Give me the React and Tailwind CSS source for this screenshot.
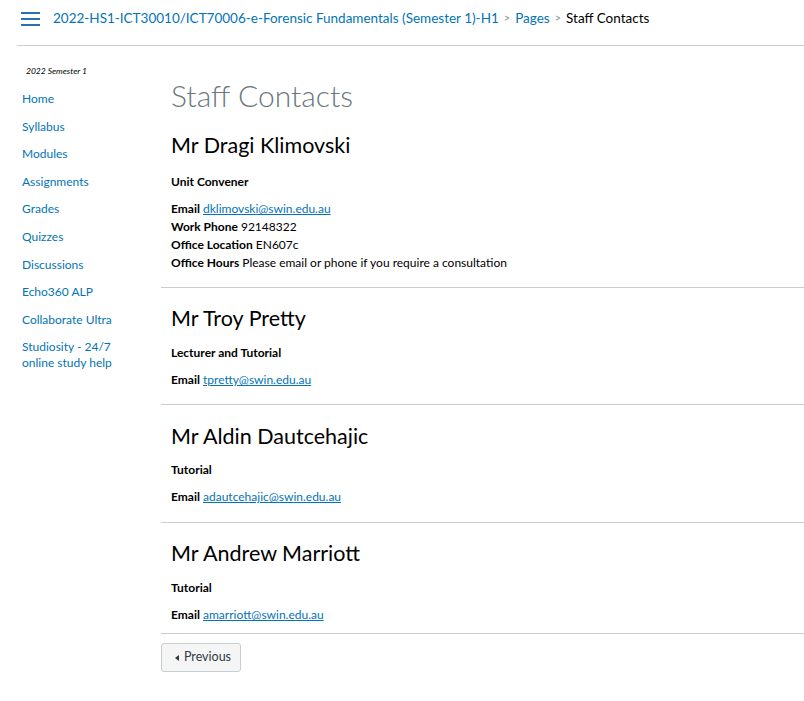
import React from "react";

const font = { fontFamily: "Lato, 'Noto Sans', sans-serif" };

const nav = [
  "Home",
  "Syllabus",
  "Modules",
  "Assignments",
  "Grades",
  "Quizzes",
  "Discussions",
  "Echo360 ALP",
  "Collaborate Ultra",
];

function Staff({ name, role, children, nameTop, roleTop }) {
  return (
    <div>
      <h2 className={`text-[21.5px] leading-[26px] text-black ${nameTop}`}>{name}</h2>
      <p className={`${roleTop} text-[12px] leading-[18px] font-bold text-black`}>{role}</p>
      <div className="mt-[9px] text-[12px] leading-[18px] text-black">{children}</div>
    </div>
  );
}

function Email({ addr }) {
  return (
    <div>
      <span className="font-bold">Email</span>{" "}
      <a className="text-[#0374b5] underline">{addr}</a>
    </div>
  );
}

export default function App() {
  return (
    <div className="w-[804px] h-[701px] bg-white overflow-hidden" style={font}>
      <header className="ml-[17px] h-[46px] border-b border-[#c7cdd1] flex items-center">
        <div className="ml-[4px] mt-[-8px] w-[19px] flex flex-col gap-[4px]">
          <div className="h-[2px] bg-[#2d6fb4]" />
          <div className="h-[2px] bg-[#2d6fb4]" />
          <div className="h-[2px] bg-[#2d6fb4]" />
        </div>
        <nav className="ml-[13px] mt-[-8px] flex items-center text-[13.5px] text-[#0374b5]">
          <span>2022-HS1-ICT30010/ICT70006-e-Forensic Fundamentals (Semester 1)-H1</span>
          <span className="mx-[5px] text-[#8b969e] text-[11px]">&gt;</span>
          <span>Pages</span>
          <span className="mx-[5px] text-[#8b969e] text-[11px]">&gt;</span>
          <span className="text-black">Staff Contacts</span>
        </nav>
      </header>
      <div className="flex">
        <aside className="w-[161px] shrink-0 pl-[22px]">
          <div className="mt-[19px] ml-[4px] text-[8.5px] italic text-black leading-[12px]">2022 Semester 1</div>
          <ul className="mt-[14px] text-[12px] text-[#0374b5]">
            {nav.map((n) => (
              <li key={n} className="h-[27.6px] leading-[16px]">{n}</li>
            ))}
            <li className="leading-[16px]">Studiosity - 24/7<br />online study help</li>
          </ul>
        </aside>
        <main className="flex-1">
          <div className="pl-[10px]">
            <h1 className="mt-[31px] text-[30px] leading-[36px] font-light text-[#6b7780]">Staff Contacts</h1>
            <Staff name="Mr Dragi Klimovski" role="Unit Convener" nameTop="mt-[19px]" roleTop="mt-[15px]">
              <Email addr="dklimovski@swin.edu.au" />
              <div><span className="font-bold">Work Phone</span> 92148322</div>
              <div><span className="font-bold">Office Location</span> EN607c</div>
              <div><span className="font-bold">Office Hours</span> Please email or phone if you require a consultation</div>
            </Staff>
          </div>
          <hr className="mt-[15px] border-t border-[#c7cdd1]" />
          <div className="pl-[10px]">
            <Staff name="Mr Troy Pretty" role="Lecturer and Tutorial" nameTop="mt-[17px]" roleTop="mt-[13px]">
              <Email addr="tpretty@swin.edu.au" />
            </Staff>
          </div>
          <hr className="mt-[15px] border-t border-[#c7cdd1]" />
          <div className="pl-[10px]">
            <Staff name="Mr Aldin Dautcehajic" role="Tutorial" nameTop="mt-[18px]" roleTop="mt-[12px]">
              <Email addr="adautcehajic@swin.edu.au" />
            </Staff>
          </div>
          <hr className="mt-[16px] border-t border-[#c7cdd1]" />
          <div className="pl-[10px]">
            <Staff name="Mr Andrew Marriott" role="Tutorial" nameTop="mt-[17px]" roleTop="mt-[13px]">
              <Email addr="amarriott@swin.edu.au" />
            </Staff>
          </div>
          <hr className="mt-[9px] border-t border-[#c7cdd1]" />
          <button className="mt-[9px] h-[29px] w-[80px] rounded-[3px] border border-[#c7cdd1] bg-[#f5f5f5] text-[12.5px] text-[#2d3b45] flex items-center justify-center gap-[5px] pl-[4px]">
            <svg width="4" height="6" viewBox="0 0 4 6"><path d="M4 0 L0 3 L4 6 Z" fill="#2d3b45" /></svg>
            Previous
          </button>
        </main>
      </div>
    </div>
  );
}
